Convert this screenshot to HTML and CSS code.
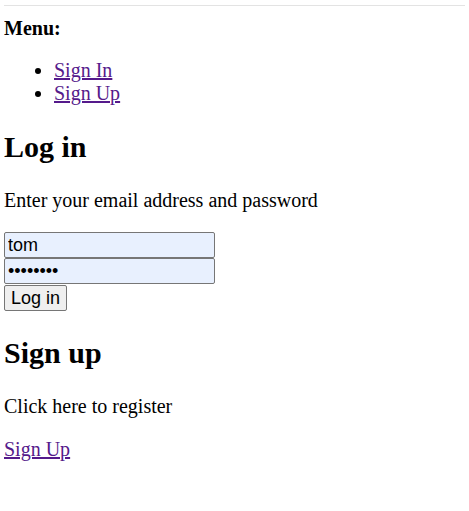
FILE: index.html
```html
<!DOCTYPE html>
<html>
<head>
<meta charset="utf-8">
<link rel="stylesheet" href="styles.css">
</head>
<body>
<div class="topline"></div>
<nav class="menu">
  <p class="menu-title">Menu:</p>
  <ul class="menu-list">
    <li><a href="#signin" class="visited">Sign In</a></li>
    <li><a href="#signup" class="visited">Sign Up</a></li>
  </ul>
</nav>
<section class="login">
  <h1 class="heading">Log in</h1>
  <p class="text">Enter your email address and password</p>
  <form class="login-form">
    <input class="field" type="text" value="tom">
    <input class="field" type="password" value="password">
    <button class="btn" type="button">Log in</button>
  </form>
</section>
<section class="signup">
  <h2 class="heading">Sign up</h2>
  <p class="text">Click here to register</p>
  <p class="text"><a href="#register" class="visited">Sign Up</a></p>
</section>
</body>
</html>
```
FILE: styles.css
```css
html, body {
  background: #fff;
}
body {
  margin: 0 4px;
  font-family: "Liberation Serif", "Times New Roman", serif;
  font-size: 20px;
  color: #000;
}
.topline {
  margin: 0 -4px;
  height: 5px;
  border-bottom: 1px solid #e3e3e3;
}
.menu-title {
  font-weight: bold;
  margin: 11px 0 0;
}
.menu-list {
  margin: 19px 0 0;
  padding-left: 50px;
}
.visited {
  color: #551a8b;
}
.heading {
  font-size: 30px;
  font-weight: bold;
  margin: 25px 0;
}
.text {
  margin: 20px 0;
}
.login-form {
  display: flex;
  flex-direction: column;
  align-items: flex-start;
}
.field {
  box-sizing: border-box;
  width: 211px;
  height: 26px;
  margin: 0;
  padding: 1px 3px;
  border: 1px solid #767676;
  border-radius: 2px;
  background: #e8f0fe;
  font-family: "Liberation Sans", Arial, sans-serif;
  font-size: 18px;
  color: #000;
}
.btn {
  box-sizing: border-box;
  height: 26px;
  margin: 1px 0 0;
  padding: 0 6px;
  border: 1px solid #767676;
  border-radius: 2px;
  background: #efefef;
  font-family: "Liberation Sans", Arial, sans-serif;
  font-size: 18px;
  color: #000;
}
```
